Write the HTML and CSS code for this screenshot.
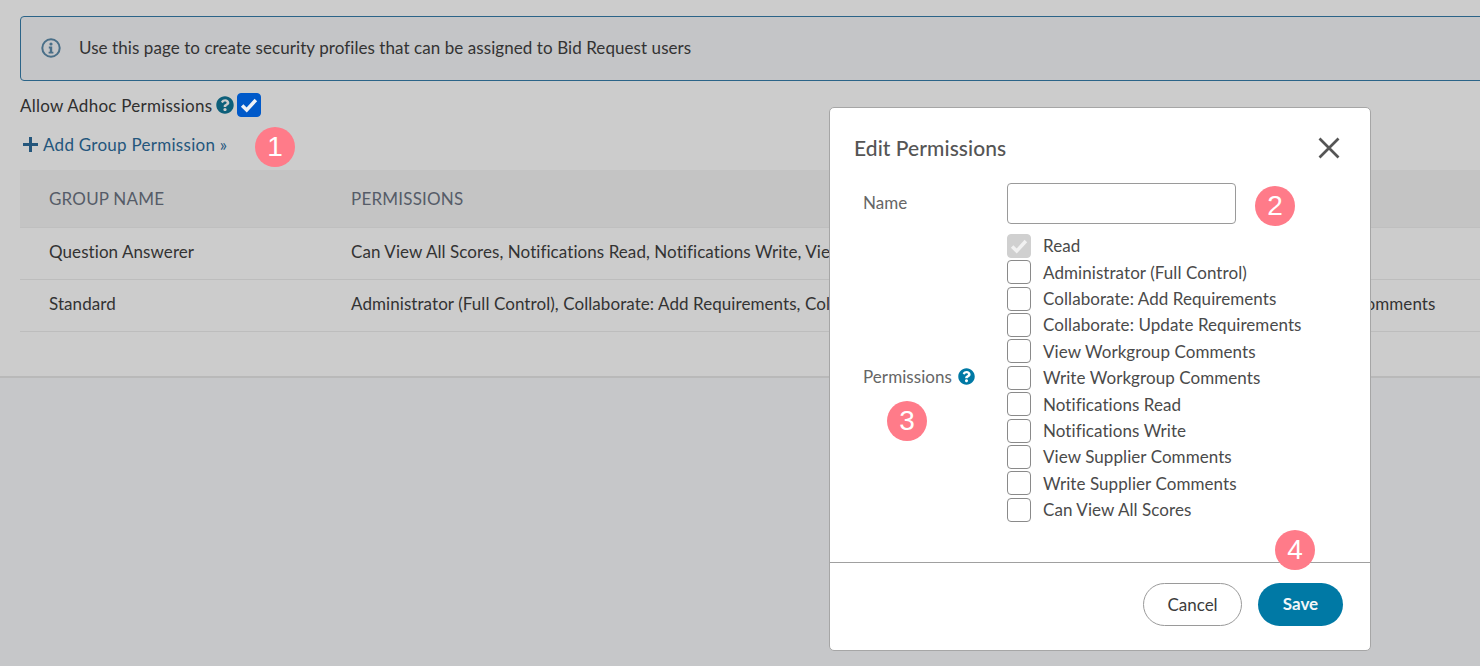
FILE: index.html
```html
<!DOCTYPE html>
<html lang="en">
<head>
<meta charset="utf-8">
<title>Edit Permissions</title>
<link rel="stylesheet" href="styles.css">
</head>
<body>
<svg class="sprite" width="0" height="0" aria-hidden="true">
  <symbol id="q" viewBox="0 0 512 512"><path d="M504 256c0 136.997-111.043 248-248 248S8 392.997 8 256C8 119.083 119.043 8 256 8s248 111.083 248 248zM262.655 90c-54.497 0-89.255 22.957-116.549 63.758-3.536 5.286-2.353 12.415 2.715 16.258l34.699 26.31c5.205 3.947 12.621 3.008 16.665-2.122 17.864-22.658 30.113-35.797 57.303-35.797 20.429 0 45.698 13.148 45.698 32.958 0 14.976-12.363 22.667-32.534 33.976C247.128 238.528 216 254.941 216 296v4c0 6.627 5.373 12 12 12h56c6.627 0 12-5.373 12-12v-1.333c0-28.462 83.186-29.647 83.186-106.667 0-58.002-60.165-102-116.531-102zM256 338c-25.365 0-46 20.635-46 46 0 25.364 20.635 46 46 46s46-20.636 46-46c0-25.365-20.635-46-46-46z"/></symbol>
  <symbol id="check" viewBox="0 0 24 24"><path d="M4.500 12.500l5 5L19.500 6.500" fill="none" stroke="currentColor" stroke-width="3.800"/></symbol>
</svg>
<main class="page">
  <section class="panel">
    <div class="banner">
      <svg class="info" viewBox="0 0 20 20"><circle cx="10" cy="10" r="8.700" fill="none" stroke="currentColor" stroke-width="2"/><circle cx="10" cy="6" r="1.600" fill="currentColor"/><path d="M7.800 8.600h3.400v5.200h1.200v1.800H7.600v-1.800h1.200v-3.400h-1z" fill="currentColor"/></svg>
      <span>Use this page to create security profiles that can be assigned to Bid Request users</span>
    </div>
    <div class="adhoc">
      <span>Allow Adhoc Permissions</span>
      <svg class="help help-dark"><use href="#q"/></svg>
      <span class="box box-blue"><svg><use href="#check"/></svg></span>
    </div>
    <a class="add-link"><svg class="plus" viewBox="0 0 14 14"><path d="M5.600 0h2.800v5.600H14v2.800H8.400V14H5.600V8.400H0V5.600h5.600z" fill="currentColor"/></svg>Add Group Permission »</a>
    <div class="table">
      <div class="row head"><div class="c1">GROUP NAME</div><div class="c2">PERMISSIONS</div></div>
      <div class="row"><div class="c1">Question Answerer</div><div class="c2">Can View All Scores, Notifications Read, Notifications Write, View Supplier Comments, View Workgroup Comments, Read</div></div>
      <div class="row"><div class="c1">Standard</div><div class="c2">Administrator (Full Control), Collaborate: Add Requirements, Collaborate: Update Requirements, Notifications Read, Write Workgroup Comments</div></div>
    </div>
  </section>
</main>

<span class="badge b1">1</span>

<div class="modal">
  <header class="m-head">
    <h2>Edit Permissions</h2>
    <svg class="close" viewBox="0 0 22 22"><path d="M1.500 1.500l19 19M20.500 1.500l-19 19" stroke="currentColor" stroke-width="2.700" fill="none"/></svg>
  </header>
  <div class="m-body">
    <div class="field name-field">
      <label class="lbl">Name</label>
      <span class="input"></span>
    </div>
    <div class="field perm-field">
      <label class="lbl">Permissions <svg class="help help-teal"><use href="#q"/></svg></label>
      <ul class="checks">
        <li><span class="box box-off"><svg><use href="#check"/></svg></span>Read</li>
        <li><span class="box"></span>Administrator (Full Control)</li>
        <li><span class="box"></span>Collaborate: Add Requirements</li>
        <li><span class="box"></span>Collaborate: Update Requirements</li>
        <li><span class="box"></span>View Workgroup Comments</li>
        <li><span class="box"></span>Write Workgroup Comments</li>
        <li><span class="box"></span>Notifications Read</li>
        <li><span class="box"></span>Notifications Write</li>
        <li><span class="box"></span>View Supplier Comments</li>
        <li><span class="box"></span>Write Supplier Comments</li>
        <li><span class="box"></span>Can View All Scores</li>
      </ul>
    </div>
  </div>
  <footer class="m-foot">
    <button class="btn cancel">Cancel</button>
    <button class="btn save">Save</button>
  </footer>
</div>
<span class="badge b2">2</span>
<span class="badge b3">3</span>
<span class="badge b4">4</span>
</body>
</html>
```
FILE: styles.css
```css
* { box-sizing: border-box; }
html, body { margin: 0; height: 666px; overflow: hidden; }
body {
  position: relative;
  background: #c6c7c9;
  font-family: "Lato", "Liberation Sans", sans-serif;
  font-size: 17px;
  letter-spacing: .07px;
  color: #333;
}
.sprite { position: absolute; }
.panel {
  height: 378px;
  background: #ccc;
  border-bottom: 2px solid #b9b9b9;
  padding: 16px 0 0 20px;
  overflow: hidden;
}
.banner {
  height: 65px;
  width: 1480px;
  display: flex;
  align-items: center;
  gap: 18px;
  padding: 0 0 2px 20px;
  background: #c4c5c7;
  border: 1px solid #2b6488;
  border-radius: 4px;
  color: #333;
}
.info { width: 20px; height: 20px; color: #4a6f88; }
.adhoc { display: flex; align-items: center; height: 24px; margin-top: 12px; color: #2f2f2f; letter-spacing: .25px; }
.help { width: 17px; height: 17px; }
.help-dark { width: 18px; height: 18px; fill: #0d5f7a; margin-left: 4px; margin-right: 3px; }
.help-teal { fill: #0079a5; vertical-align: -2px; margin-left: 2px; }
.add-link { display: flex; align-items: center; gap: 5px; margin-top: 17px; margin-left: 3px; height: 20px; color: #24567c; letter-spacing: .27px; }
.plus { width: 15px; height: 15px; }
.table { margin-top: 16px; width: 1460px; }
.row { display: flex; height: 52px; align-items: center; padding-bottom: 4px; border-bottom: 1px solid #bdbdbd; white-space: nowrap; overflow: hidden; }
.row.head { height: 58px; padding-bottom: 0; background: #c4c4c4; border-bottom: 1px solid #bfbfbf; color: #565c68; letter-spacing: .2px; }
.c1 { width: 331px; padding-left: 29px; flex: none; }
.c2 { flex: none; }

.box {
  width: 24px; height: 24px; flex: none;
  display: inline-flex; align-items: center; justify-content: center;
  background: #fff;
  border: 1px solid #8a8a8a;
  border-radius: 4px;
}
.box svg { width: 22px; height: 22px; }
.box-blue { background: #0059c9; border-color: #0059c9; color: #eef1f6; }
.box-off { background: #d0d0d0; border-color: #d0d0d0; color: #f1f1f1; }

.modal {
  position: absolute;
  left: 829px; top: 107px;
  width: 542px; height: 544px;
  background: #fff;
  border: 1px solid #a6a6a6;
  border-radius: 5px;
  display: flex;
  flex-direction: column;
  color: #4a4a4a;
}
.m-head { display: flex; align-items: center; justify-content: space-between; padding: 4px 30px 0 24px; height: 75px; flex: none; }
.m-head h2 { margin: 0; font-size: 21px; font-weight: 500; color: #555; }
.close { width: 22px; height: 22px; color: #555; }
.m-body { flex: 1; }
.field { display: flex; }
.lbl { width: 177px; padding-left: 33px; flex: none; color: #666; }
.name-field { align-items: center; height: 41px; }
.name-field .lbl { padding-bottom: 2px; }
.input { display: block; width: 229px; height: 41px; border: 1px solid #9a9a9a; border-radius: 4px; background: #fff; }
.perm-field { align-items: center; margin-top: 8.6px; }
.perm-field .lbl { padding-bottom: 3px; }
.checks { list-style: none; margin: 0; padding: 0; }
.checks li { display: flex; align-items: center; gap: 12px; height: 26.4px; }
.m-foot {
  flex: none; height: 88px;
  border-top: 1px solid #a0a0a0;
  display: flex; justify-content: flex-end; align-items: flex-start;
  gap: 16px; padding: 20px 27px 0 0;
}
.btn { height: 43px; border-radius: 22px; font: inherit; font-size: 17px; padding: 0 0 1px; }
.cancel { width: 99px; background: #fff; border: 1px solid #9a9a9a; color: #3c3c3c; }
.save { width: 85px; background: #0079a5; border: 0; color: #f2f6f8; font-weight: 700; padding-bottom: 3px; }

.badge {
  position: absolute;
  width: 40px; height: 40px; border-radius: 50%;
  background: #ff7b89; color: #fff;
  display: flex; align-items: center; justify-content: center;
  font-family: "Liberation Sans", sans-serif;
  font-size: 28px;
}
.b1 { left: 255px; top: 127px; }
.b2 { left: 1255px; top: 186px; }
.b3 { left: 887px; top: 401px; }
.b4 { left: 1275px; top: 530px; }
```
